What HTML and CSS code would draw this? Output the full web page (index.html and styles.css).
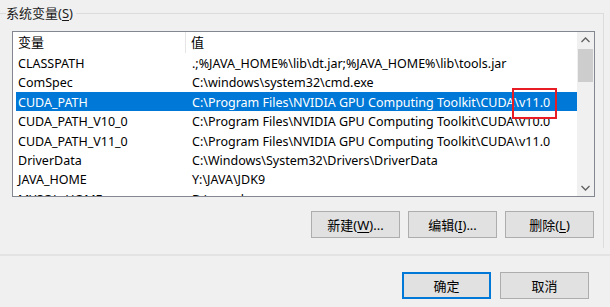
FILE: index.html
```html
<!DOCTYPE html>
<html>
<head>
  <meta charset="UTF-8">
  <title>环境变量</title>
  <link rel="stylesheet" href="styles.css">
</head>
<body>
  <div class="group">
    <div class="group-title">系统变量(<u>S</u>)</div>
    <div class="group-body">
      <div class="list">
        <div class="table">
          <div class="head">
            <div class="col-name">变量</div>
            <div class="col-value">值</div>
          </div>
          <div class="row">
            <div class="col-name">CLASSPATH</div>
            <div class="col-value">.;%JAVA_HOME%\lib\dt.jar;%JAVA_HOME%\lib\tools.jar</div>
          </div>
          <div class="row">
            <div class="col-name">ComSpec</div>
            <div class="col-value">C:\windows\system32\cmd.exe</div>
          </div>
          <div class="row selected">
            <div class="col-name">CUDA_PATH</div>
            <div class="col-value">C:\Program Files\NVIDIA GPU Computing Toolkit\CUDA<span class="mark">\v11.0</span></div>
          </div>
          <div class="row">
            <div class="col-name">CUDA_PATH_V10_0</div>
            <div class="col-value">C:\Program Files\NVIDIA GPU Computing Toolkit\CUDA\v10.0</div>
          </div>
          <div class="row">
            <div class="col-name">CUDA_PATH_V11_0</div>
            <div class="col-value">C:\Program Files\NVIDIA GPU Computing Toolkit\CUDA\v11.0</div>
          </div>
          <div class="row">
            <div class="col-name">DriverData</div>
            <div class="col-value">C:\Windows\System32\Drivers\DriverData</div>
          </div>
          <div class="row">
            <div class="col-name">JAVA_HOME</div>
            <div class="col-value">Y:\JAVA\JDK9</div>
          </div>
          <div class="row">
            <div class="col-name">MYSQL_HOME</div>
            <div class="col-value">D:\mysql</div>
          </div>
        </div>
        <div class="scrollbar">
          <svg class="arrow" width="17" height="17" viewBox="0 0 17 17"><path d="M4.5 10 L8.5 6 L12.5 10" fill="none" stroke="#606060" stroke-width="1.3"/></svg>
          <div class="track"><div class="thumb"></div></div>
          <svg class="arrow" width="17" height="17" viewBox="0 0 17 17"><path d="M4.5 7 L8.5 11 L12.5 7" fill="none" stroke="#606060" stroke-width="1.3"/></svg>
        </div>
      </div>
      <div class="actions">
        <button class="btn">新建(<u>W</u>)...</button>
        <button class="btn">编辑(<u>I</u>)...</button>
        <button class="btn">删除(<u>L</u>)</button>
      </div>
    </div>
  </div>

  <div class="footer">
    <button class="btn primary">确定</button>
    <button class="btn">取消</button>
  </div>
</body>
</html>
```

FILE: styles.css
```css
* {
  margin: 0;
  padding: 0;
  box-sizing: border-box;
}

body {
  font-family: "Noto Sans", "Noto Sans CJK SC", sans-serif;
  font-size: 12.5px;
  color: #000;
  background: #f0f0f0;
  width: 610px;
  height: 307px;
  overflow: hidden;
}

u {
  text-decoration: underline;
  text-underline-offset: 2px;
}

/* Group box */
.group {
  position: relative;
  margin-right: 6px;
  padding-top: 13px;
}

.group-title {
  position: absolute;
  left: 6px;
  top: 4px;
  padding-right: 3px;
  background: #f0f0f0;
  line-height: 18px;
  font-size: 13px;
  color: #1a1a1a;
}

.group-body {
  border-top: 1px solid #dcdcdc;
  border-right: 1px solid #dcdcdc;
  height: 235px;
  padding: 17px 8px 0 12px;
}

/* List view */
.list {
  display: flex;
  height: 166px;
  border: 1px solid #828790;
  background: #fff;
}

.table {
  flex: 1;
  overflow: hidden;
}

.head,
.row {
  display: grid;
  grid-template-columns: 173px 1fr;
  white-space: nowrap;
}

.head {
  height: 21px;
  line-height: 21px;
  font-size: 13px;
}

.head .col-name {
  padding-left: 5px;
  border-right: 1px solid #e5e5e5;
}

.head .col-value {
  padding-left: 5px;
}

.row {
  height: 19.4px;
  line-height: 20px;
  margin-left: 3px;
  padding-top: 1px;
}

.row .col-name {
  padding-left: 2px;
}

.row .col-value {
  padding-left: 3px;
}

.row.selected {
  background: #0078d7;
  color: #fff;
  padding-top: 0;
  line-height: 21px;
}

.mark {
  position: relative;
}

.mark::after {
  content: "";
  position: absolute;
  left: -2px;
  right: -7px;
  top: -6px;
  bottom: -8px;
  border: 2px solid #e81c24;
}

/* Scrollbar */
.scrollbar {
  width: 17px;
  display: flex;
  flex-direction: column;
  background: #f0f0f0;
}

.track {
  flex: 1;
}

.thumb {
  height: 33px;
  background: #cdcdcd;
  margin: 0 1px;
}

/* Buttons */
.actions {
  display: flex;
  justify-content: flex-end;
  gap: 8px;
  margin-top: 14px;
  padding-right: 1px;
}

.btn {
  width: 89px;
  height: 27px;
  font-family: inherit;
  font-size: 13px;
  color: #000;
  background: #e1e1e1;
  border: 1px solid #adadad;
}

.btn.primary {
  border: 2px solid #0078d7;
}

.footer {
  margin-top: 6px;
  border-top: 2px solid #e3e3e3;
  display: flex;
  justify-content: flex-end;
  gap: 9px;
  padding: 16px 21px 0 0;
}
```
